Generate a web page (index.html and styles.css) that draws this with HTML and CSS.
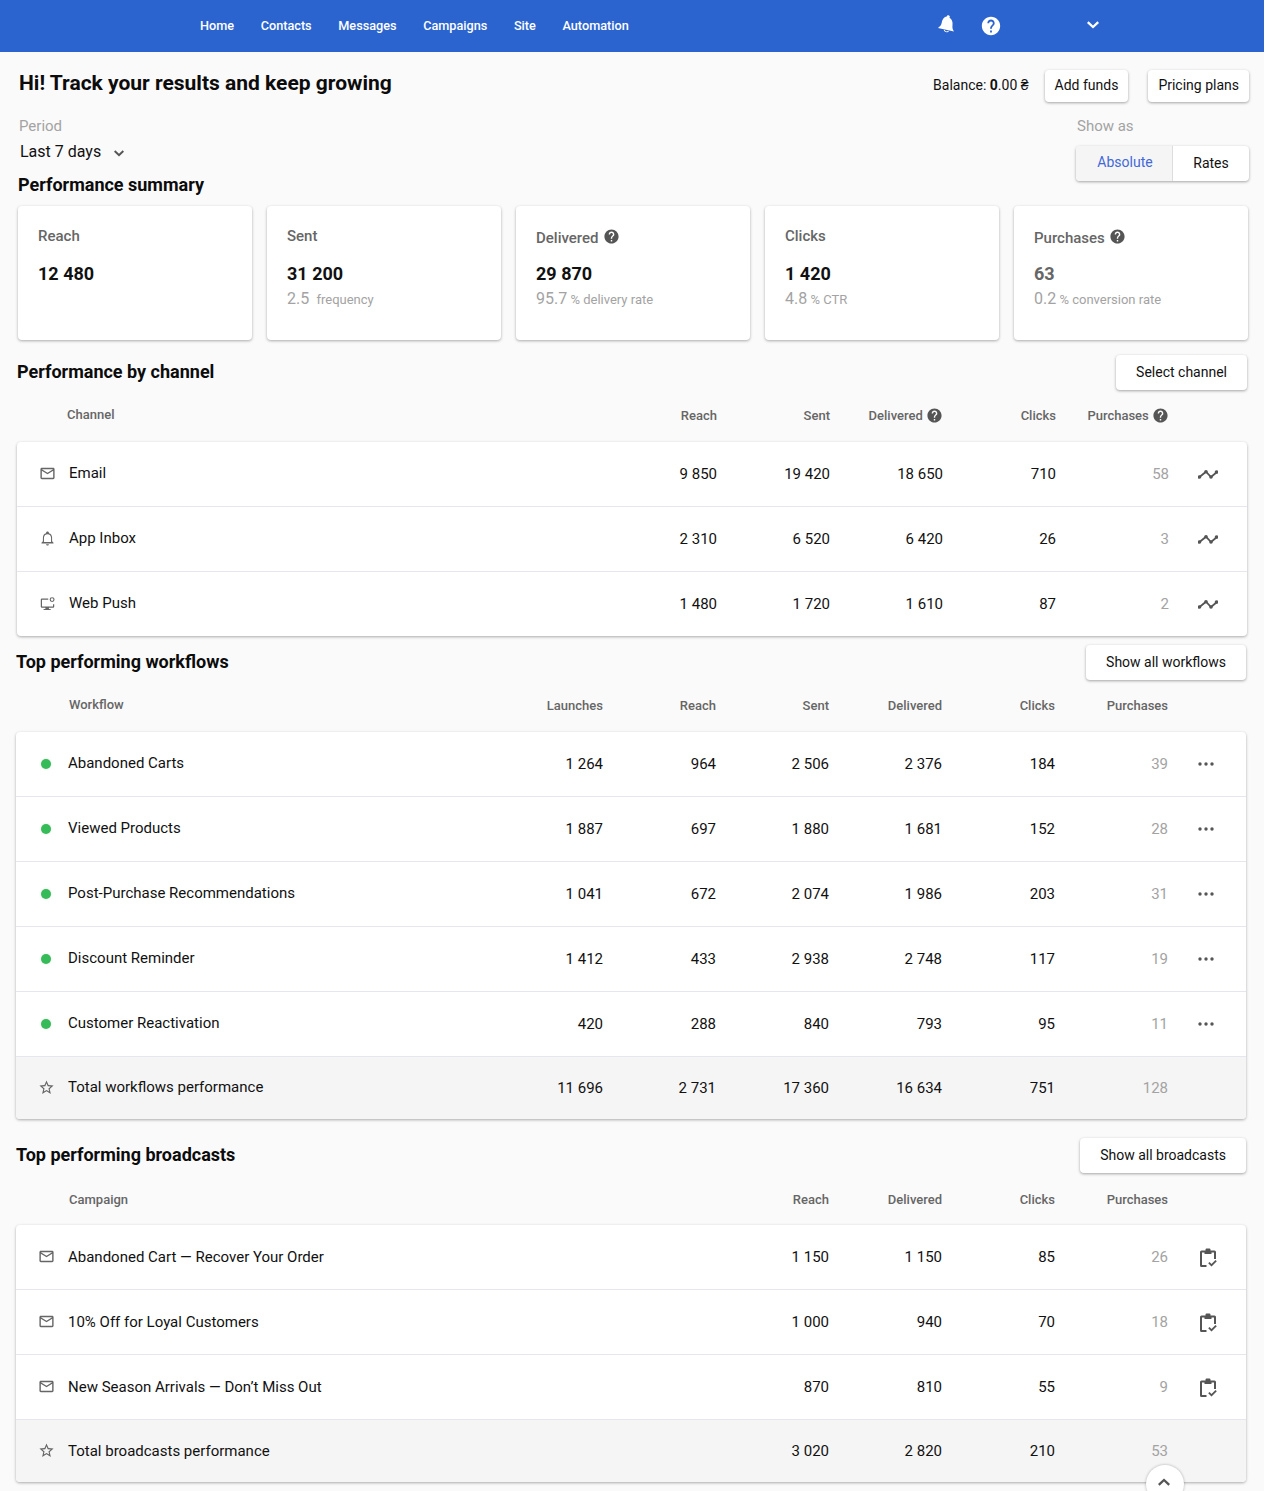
FILE: index.html
```html
<!DOCTYPE html>
<html lang="en">
<head>
<meta charset="utf-8">
<title>Dashboard</title>
<link rel="stylesheet" href="styles.css">
</head>
<body>
<svg class="defs" width="0" height="0" aria-hidden="true">
  <symbol id="i-mail" viewBox="0 0 24 24"><path d="M20 4H4c-1.1 0-2 .9-2 2v12c0 1.1.9 2 2 2h16c1.1 0 2-.9 2-2V6c0-1.1-.9-2-2-2zm0 14H4V8l8 5 8-5v10zm-8-7L4 6h16l-8 5z"/></symbol>
  <symbol id="i-bell" viewBox="0 0 24 24"><path d="M12 22c1.100 0 2-.9 2-2h-4c0 1.100.9 2 2 2zm6.500-6v-5c0-3.070-1.630-5.640-4.500-6.320V4c0-1.100-.9-2-2-2s-2 .9-2 2v.68C7.130 5.360 5.500 7.920 5.500 11v5l-2 2v1h17v-1zM17 17H7v-6c0-2.700 1.900-5 5-5s5 2.300 5 5z"/></symbol>
  <symbol id="i-bell-solid" viewBox="0 0 20 20"><path d="M13 1.500c-1-.5-2 0-2.200 1C7.500 3 6.300 6 5.800 8.500 5.300 11 4 12.500 2 14l16 3.500c-1.500-2-1.800-4-1.500-6.500.4-3-.6-6-3-7.300C14 2.500 14 2 13 1.500z"/><path d="M7.800 15.800c.1 2.500 4 3.400 5.200 1.100l-1-.2c-.8 1.200-2.900.8-3.200-.7z"/></symbol>
  <symbol id="i-monitor" viewBox="0 0 24 24"><path d="M13 5H4a1.500 1.500 0 0 0-1.500 1.500v10A1.500 1.500 0 0 0 4 18h5v1.600H6.500v1.600h10v-1.600H14V18h6a1.500 1.500 0 0 0 1.500-1.500V13h-1.700v3.300H4.200V6.700H13z"/><path fill-rule="evenodd" d="M18.500 3a3.500 3.500 0 1 1 0 7 3.500 3.500 0 0 1 0-7zm0 1.600a1.900 1.900 0 1 0 0 3.800 1.900 1.900 0 0 0 0-3.800z"/></symbol>
  <symbol id="i-star" viewBox="0 0 24 24"><path d="M22 9.24l-7.19-.62L12 2 9.19 8.63 2 9.24l5.46 4.73L5.82 21 12 17.27 18.18 21l-1.63-7.03L22 9.24zM12 15.4l-3.76 2.27 1-4.28-3.32-2.88 4.38-.38L12 6.1l1.71 4.04 4.38.38-3.32 2.88 1 4.28L12 15.4z"/></symbol>
  <symbol id="i-help" viewBox="0 0 24 24"><path d="M12 2C6.48 2 2 6.48 2 12s4.48 10 10 10 10-4.48 10-10S17.52 2 12 2zm1 17h-2v-2h2v2zm2.07-7.75l-.9.92C13.45 12.9 13 13.5 13 15h-2v-.5c0-1.1.45-2.1 1.17-2.83l1.24-1.26c.37-.36.59-.86.59-1.41 0-1.1-.9-2-2-2s-2 .9-2 2H8c0-2.21 1.79-4 4-4s4 1.79 4 4c0 .88-.36 1.68-.93 2.25z"/></symbol>
  <symbol id="i-trend" viewBox="0 0 20 12"><path class="trend-line" d="M1.500 9L8 3.700 13 9 19 4"/><circle cx="1.500" cy="9" r="1.800"/><circle cx="8" cy="3.700" r="1.800"/><circle cx="13" cy="9" r="1.800"/><circle cx="18.500" cy="4" r="1.800"/></symbol>
  <symbol id="i-dots" viewBox="0 0 18 6"><circle cx="3" cy="3" r="1.700"/><circle cx="9" cy="3" r="1.700"/><circle cx="15" cy="3" r="1.700"/></symbol>
  <symbol id="i-clip" viewBox="0 0 18 20"><path d="M6.500 2.500V1.600C6.500 1 7 .5 8 .5h2c1 0 1.500.5 1.500 1.100v.9H15.500A1.500 1.500 0 0 1 17 4v7h-2V4.500h-2.500V6h-7V4.500H3v12.500h4.500v2H2.500A1.500 1.500 0 0 1 1 17.500V4a1.500 1.500 0 0 1 1.500-1.500z"/><path d="M9.200 15.200l1.300-1.300 2 2 4-4 1.300 1.300-5.300 5.300z"/></symbol>
  <symbol id="i-chev" viewBox="0 0 12 8"><path d="M1.600.2L6 4.400 10.400.2 12 1.900 6 7.600 0 1.900z"/></symbol>
</svg>

<header class="topbar">
  <nav class="nav">
    <a class="nav-link">Home</a>
    <a class="nav-link">Contacts</a>
    <a class="nav-link">Messages</a>
    <a class="nav-link">Campaigns</a>
    <a class="nav-link">Site</a>
    <a class="nav-link">Automation</a>
  </nav>
  <div class="top-icons">
    <svg class="top-bell"><use href="#i-bell-solid"/></svg>
    <svg class="top-help"><use href="#i-help"/></svg>
    <svg class="top-chev"><use href="#i-chev"/></svg>
  </div>
</header>

<main class="page">
  <div class="intro">
    <h1 class="title">Hi! Track your results and keep growing</h1>
    <div class="account">
      <span class="balance">Balance: <b>0</b>.00 ₴</span>
      <button class="btn btn-add">Add funds</button>
      <button class="btn">Pricing plans</button>
    </div>
  </div>

  <div class="filters">
    <div class="period">
      <div class="filter-label">Period</div>
      <div class="period-value">Last 7 days <svg class="period-chev"><use href="#i-chev"/></svg></div>
    </div>
    <div class="show-as">
      <div class="filter-label filter-label-right">Show as</div>
      <div class="toggle">
        <span class="toggle-item toggle-on">Absolute</span>
        <span class="toggle-item">Rates</span>
      </div>
    </div>
  </div>

  <h2 class="heading heading-summary">Performance summary</h2>
  <section class="cards">
    <div class="card">
      <div class="card-label">Reach</div>
      <div class="card-value">12 480</div>
    </div>
    <div class="card">
      <div class="card-label">Sent</div>
      <div class="card-value">31 200</div>
      <div class="card-sub"><span class="sub-num sub-num-wide">2.5</span> frequency</div>
    </div>
    <div class="card">
      <div class="card-label card-label-help">Delivered <svg class="help"><use href="#i-help"/></svg></div>
      <div class="card-value">29 870</div>
      <div class="card-sub"><span class="sub-num">95.7</span> % delivery rate</div>
    </div>
    <div class="card">
      <div class="card-label">Clicks</div>
      <div class="card-value">1 420</div>
      <div class="card-sub"><span class="sub-num">4.8</span> % CTR</div>
    </div>
    <div class="card">
      <div class="card-label card-label-help">Purchases <svg class="help"><use href="#i-help"/></svg></div>
      <div class="card-value card-value-muted">63</div>
      <div class="card-sub"><span class="sub-num">0.2</span> % conversion rate</div>
    </div>
  </section>

  <section class="block block-channel">
    <div class="block-head">
      <h2 class="heading">Performance by channel</h2>
      <button class="btn btn-wide">Select channel</button>
    </div>
    <div class="row row-five thead">
      <span class="c-name">Channel</span>
      <span>Reach</span><span>Sent</span><span>Delivered <svg class="help help-h"><use href="#i-help"/></svg></span><span>Clicks</span><span>Purchases <svg class="help help-h"><use href="#i-help"/></svg></span>
    </div>
    <div class="table">
      <div class="row row-five">
        <svg class="ico"><use href="#i-mail"/></svg><span class="c-name">Email</span>
        <span>9 850</span><span>19 420</span><span>18 650</span><span>710</span><span class="muted">58</span>
        <svg class="act-trend"><use href="#i-trend"/></svg>
      </div>
      <div class="row row-five">
        <svg class="ico"><use href="#i-bell"/></svg><span class="c-name">App Inbox</span>
        <span>2 310</span><span>6 520</span><span>6 420</span><span>26</span><span class="muted">3</span>
        <svg class="act-trend"><use href="#i-trend"/></svg>
      </div>
      <div class="row row-five">
        <svg class="ico"><use href="#i-monitor"/></svg><span class="c-name">Web Push</span>
        <span>1 480</span><span>1 720</span><span>1 610</span><span>87</span><span class="muted">2</span>
        <svg class="act-trend"><use href="#i-trend"/></svg>
      </div>
    </div>
  </section>

  <section class="block block-workflows">
    <div class="block-head">
      <h2 class="heading">Top performing workflows</h2>
      <button class="btn btn-wide">Show all workflows</button>
    </div>
    <div class="row row-six thead">
      <span class="c-name">Workflow</span>
      <span>Launches</span><span>Reach</span><span>Sent</span><span>Delivered</span><span>Clicks</span><span>Purchases</span>
    </div>
    <div class="table">
      <div class="row row-six">
        <i class="dot"></i><span class="c-name">Abandoned Carts</span>
        <span>1 264</span><span>964</span><span>2 506</span><span>2 376</span><span>184</span><span class="muted">39</span>
        <svg class="act-dots"><use href="#i-dots"/></svg>
      </div>
      <div class="row row-six">
        <i class="dot"></i><span class="c-name">Viewed Products</span>
        <span>1 887</span><span>697</span><span>1 880</span><span>1 681</span><span>152</span><span class="muted">28</span>
        <svg class="act-dots"><use href="#i-dots"/></svg>
      </div>
      <div class="row row-six">
        <i class="dot"></i><span class="c-name">Post-Purchase Recommendations</span>
        <span>1 041</span><span>672</span><span>2 074</span><span>1 986</span><span>203</span><span class="muted">31</span>
        <svg class="act-dots"><use href="#i-dots"/></svg>
      </div>
      <div class="row row-six">
        <i class="dot"></i><span class="c-name">Discount Reminder</span>
        <span>1 412</span><span>433</span><span>2 938</span><span>2 748</span><span>117</span><span class="muted">19</span>
        <svg class="act-dots"><use href="#i-dots"/></svg>
      </div>
      <div class="row row-six">
        <i class="dot"></i><span class="c-name">Customer Reactivation</span>
        <span>420</span><span>288</span><span>840</span><span>793</span><span>95</span><span class="muted">11</span>
        <svg class="act-dots"><use href="#i-dots"/></svg>
      </div>
      <div class="row row-six row-total">
        <svg class="ico"><use href="#i-star"/></svg><span class="c-name">Total workflows performance</span>
        <span>11 696</span><span>2 731</span><span>17 360</span><span>16 634</span><span>751</span><span class="muted">128</span>
      </div>
    </div>
  </section>

  <section class="block block-broadcasts">
    <div class="block-head">
      <h2 class="heading">Top performing broadcasts</h2>
      <button class="btn btn-wide">Show all broadcasts</button>
    </div>
    <div class="row row-four thead">
      <span class="c-name">Campaign</span>
      <span>Reach</span><span>Delivered</span><span>Clicks</span><span>Purchases</span>
    </div>
    <div class="table">
      <div class="row row-four">
        <svg class="ico"><use href="#i-mail"/></svg><span class="c-name">Abandoned Cart — Recover Your Order</span>
        <span>1 150</span><span>1 150</span><span>85</span><span class="muted">26</span>
        <svg class="act-clip"><use href="#i-clip"/></svg>
      </div>
      <div class="row row-four">
        <svg class="ico"><use href="#i-mail"/></svg><span class="c-name">10% Off for Loyal Customers</span>
        <span>1 000</span><span>940</span><span>70</span><span class="muted">18</span>
        <svg class="act-clip"><use href="#i-clip"/></svg>
      </div>
      <div class="row row-four">
        <svg class="ico"><use href="#i-mail"/></svg><span class="c-name">New Season Arrivals — Don’t Miss Out</span>
        <span>870</span><span>810</span><span>55</span><span class="muted">9</span>
        <svg class="act-clip"><use href="#i-clip"/></svg>
      </div>
      <div class="row row-four row-total">
        <svg class="ico"><use href="#i-star"/></svg><span class="c-name">Total broadcasts performance</span>
        <span>3 020</span><span>2 820</span><span>210</span><span class="muted">53</span>
      </div>
    </div>
  </section>
</main>

<button class="to-top" aria-label="Back to top"><svg class="to-top-chev"><use href="#i-chev"/></svg></button>
</body>
</html>
```

FILE: styles.css
```css
* { box-sizing: border-box; }
html, body { margin: 0; padding: 0; }
body {
  background: #fafafa;
  color: #111;
  font-family: Roboto, "Liberation Sans", sans-serif;
  font-size: 15px;
  line-height: 20px;
}
.defs { position: absolute; }
svg { fill: currentColor; display: block; }

.topbar {
  height: 52px;
  background: #2b64cf;
  color: #fff;
  display: flex;
  padding-left: 200px;
}
.nav { display: flex; align-items: center; gap: 26.600px; width: 738px; }
.nav-link { font-size: 12.700px; font-weight: 500; }
.top-icons { display: flex; align-items: center; }
.top-bell { width: 20px; height: 20px; margin: -4px 24px 0 -2px; }
.top-help { width: 22px; height: 22px; margin-right: 85px; }
.top-chev { width: 12px; height: 8px; margin-top: -2px; }

.page { padding: 0 18px 9px 16px; }

.intro {
  display: flex;
  justify-content: space-between;
  align-items: center;
  padding: 18px 0 0 3px;
  height: 50px;
  margin-right: -3px;
}
.title { margin: -6px 0 0; font-size: 21px; line-height: 26px; font-weight: 700; color: #0c0c0c; }
.account { display: flex; align-items: center; }
.balance { font-size: 14px; margin-right: 16px; padding-bottom: 2px; }
.btn {
  font-family: inherit;
  font-size: 14px;
  height: 32px;
  padding: 0 10px 2px;
  background: #fff;
  color: #111;
  border: 0;
  border-radius: 4px;
  box-shadow: 0 1px 3px rgba(0, 0, 0, .35);
}
.btn-add { margin-right: 20px; }
.btn-wide { height: 35px; padding: 0 20px 2px; }

.filters {
  display: flex;
  justify-content: space-between;
  padding-left: 3px;
  margin-right: -3px;
  height: 76px;
  padding-top: 14px;
}
.filter-label { font-size: 15px; color: #a3a3a3; line-height: 20px; }
.filter-label-right { padding-left: 1px; }
.period-value { display: flex; align-items: center; font-size: 16px; margin: 6px 0 0 1px; line-height: 20px; }
.period-chev { width: 10px; height: 7px; margin-left: 13px; margin-top: 2px; color: #555; }
.show-as { width: 173px; }
.toggle {
  display: flex;
  height: 35px;
  margin-top: 10px;
  border-radius: 4px;
  box-shadow: 0 1px 3px rgba(0, 0, 0, .35);
  background: #fff;
  overflow: hidden;
}
.toggle-item { display: flex; align-items: center; justify-content: center; font-size: 14px; width: 76px; padding-bottom: 1px; }
.toggle-on { width: 97px; background: #f5f5f5; color: #4169d8; border-right: 1px solid #ddd; padding: 0 0 3px 2px; }

.heading { margin: 0; font-size: 18px; line-height: 22px; font-weight: 700; color: #0c0c0c; }
.heading-summary { margin: -4px 0 10px 2px; }

.cards { display: flex; gap: 15px; margin-left: 2px; margin-right: -2px; }
.card {
  width: 234px;
  height: 134px;
  background: #fff;
  border-radius: 4px;
  box-shadow: 0 1px 3px rgba(0, 0, 0, .32);
  padding: 20px 20px;
}
.card-label { font-size: 15px; font-weight: 500; color: #666; line-height: 20px; height: 22px; }
.card-label-help { display: flex; align-items: center; gap: 4px; padding-top: 2px; }
.card-label-help .help { margin-top: -3px; }
.card-value { font-size: 18px; font-weight: 700; color: #111; margin-top: 14px; line-height: 24px; }
.card-value-muted { color: #666; }
.card-sub { font-size: 13px; color: #a3a3a3; line-height: 20px; margin-top: 3px; }
.sub-num { font-size: 16px; }
.sub-num-wide { margin-right: 4px; }
.help { width: 17px; height: 17px; color: #555; flex: none; }
.help-h { display: inline-block; vertical-align: -4px; }

.block { margin-top: 15px; }
.block-channel { margin: 15px -1px 0 1px; }
.block-workflows { margin-top: 9px; }
.block-broadcasts { margin-top: 19px; }
.block-head { display: flex; justify-content: space-between; align-items: center; height: 35px; }
.block-head .heading { margin-top: -1px; }

.table {
  background: #fff;
  border-radius: 4px;
  box-shadow: 0 1px 3px rgba(0, 0, 0, .32);
  overflow: hidden;
}
.row {
  display: grid;
  align-items: center;
  height: 65px;
  text-align: right;
  border-top: 1px solid #e6e6ee;
  justify-items: end;
}
.row:first-child { border-top: 0; height: 64px; }
.row-five { grid-template-columns: 52px 1fr repeat(5, 113px) 78px; }
.row-six { grid-template-columns: 52px 1fr repeat(6, 113px) 78px; }
.row-four { grid-template-columns: 52px 1fr repeat(4, 113px) 78px; }
.row > :first-child { justify-self: center; }
.row .c-name { justify-self: start; text-align: left; padding-bottom: 2px; }
.row-four .c-name { padding-bottom: 0; }

.thead {
  height: 52px;
  border: 0;
  font-size: 13px;
  font-weight: 500;
  color: #666;
}
.thead .c-name { grid-column: 2; padding-bottom: 3px; margin-left: 1px; }
.thead > span { white-space: nowrap; }
.block-channel .thead .c-name { margin-left: -2px; }
.row-four.thead { padding-top: 2px; }
.row-four.thead .c-name { padding-bottom: 1px; }

.muted { color: #a3a3a3; }
.row-total { background: #f5f5f5; height: 63px; }
.ico { width: 17px; height: 17px; color: #666; margin: 0 0 1px 8px; }
.dot { width: 10px; height: 10px; border-radius: 50%; background: #35bb57; margin-left: 8px; box-shadow: 0 0 3px rgba(0, 0, 0, .12); }
.act-trend { width: 20px; height: 12px; color: #555; justify-self: center; margin-left: 0; }
.trend-line { fill: none; stroke: currentColor; stroke-width: 1.800px; }
.act-dots { width: 18px; height: 6px; color: #555; justify-self: center; margin-left: -2px; }
.act-clip { width: 18px; height: 20px; color: #555; justify-self: center; margin: 2px 0 0 2px; }

.to-top {
  position: fixed;
  right: 80px;
  bottom: -12px;
  width: 38px;
  height: 38px;
  border: 0;
  border-radius: 50%;
  background: #fff;
  box-shadow: 0 0 3px rgba(0, 0, 0, .3);
  padding: 0;
}
.to-top-chev { width: 12px; height: 8px; color: #555; transform: rotate(180deg); position: absolute; left: 12px; top: 13px; }
```
